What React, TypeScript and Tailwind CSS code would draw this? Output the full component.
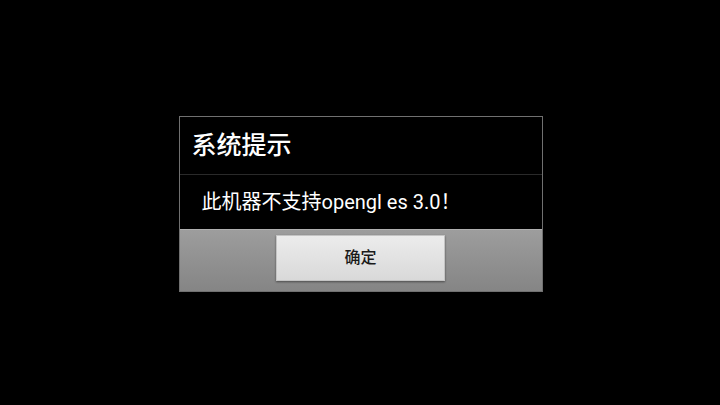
import React from "react";

export default function App() {
  return (
    <div
      className="w-[720px] h-[405px] bg-black flex items-center justify-center"
      style={{ fontFamily: "Roboto, 'Noto Sans CJK SC', sans-serif" }}
    >
      <div className="w-[364px] border border-[#707070] bg-black flex flex-col mt-[2px] ml-[1px]">
        <div className="h-[58px] flex items-center pl-[12px] border-b border-[#2a2a2a]">
          <span className="text-[25px] text-white leading-none font-medium">系统提示</span>
        </div>
        <div className="h-[54px] flex items-center pl-[22px]">
          <span className="text-[20px] text-white leading-none">此机器不支持opengl es 3.0！</span>
        </div>
        <div className="h-[62px] bg-gradient-to-b from-[#9d9d9d] to-[#858585] border-t border-[#b0b0b0] flex justify-center pt-[5px]">
          <button className="w-[169px] h-[46px] bg-gradient-to-b from-[#ececec] to-[#d9d9d9] border border-[#c4c4c4] shadow-[0_1px_2px_rgba(0,0,0,0.45)] text-[16px] text-[#1a1a1a] font-medium flex items-center justify-center">
            确定
          </button>
        </div>
      </div>
    </div>
  );
}
